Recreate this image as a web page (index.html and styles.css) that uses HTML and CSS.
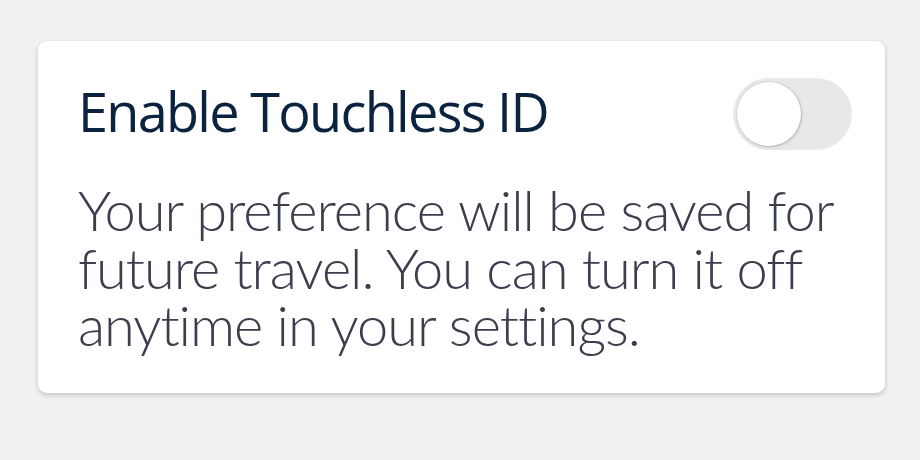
FILE: index.html
```html
<!DOCTYPE html>
<html>
<head>
<meta charset="utf-8">
<link rel="stylesheet" href="styles.css">
</head>
<body>
<div class="card">
  <div class="head">
    <h1 class="title">Enable Touchless ID</h1>
    <div class="toggle"><div class="knob"></div></div>
  </div>
  <p class="desc">Your preference will be saved for future travel. You can turn it off anytime in your settings.</p>
</div>
</body>
</html>
```
FILE: styles.css
```css
html, body { margin: 0; padding: 0; }
body {
  background: #f0f1f3;
  width: 920px;
  height: 460px;
  font-family: Lato, "Open Sans", sans-serif;
  padding: 41px 35px 0 38px;
  box-sizing: border-box;
}
.card {
  background: #fff;
  border-radius: 9px;
  box-shadow: 0 2px 5px rgba(0,0,0,0.2);
  padding: 37px 33px 0 40px;
  height: 352px;
  box-sizing: border-box;
}
.head {
  display: flex;
  justify-content: space-between;
  align-items: flex-start;
}
.title {
  margin: 3px 0 0;
  font-family: "Open Sans", sans-serif;
  font-size: 54px;
  font-weight: 500;
  letter-spacing: -1.7px;
  color: #0c2340;
  line-height: 60px;
}
.toggle {
  width: 119px;
  height: 72px;
  border-radius: 36px;
  background: #e8e8ea;
  position: relative;
  flex-shrink: 0;
}
.knob {
  position: absolute;
  left: 4px;
  top: 4px;
  width: 64px;
  height: 64px;
  border-radius: 50%;
  background: #fff;
  box-shadow: 0 0 0 1px rgba(0,0,0,0.06), 1px 1px 3px rgba(0,0,0,0.18);
}
.desc {
  margin: 31px 0 0;
  font-size: 56px;
  font-weight: 300;
  letter-spacing: -1px;
  line-height: 57.5px;
  color: #3a3e4d;
  font-variant-ligatures: none;
}
```
